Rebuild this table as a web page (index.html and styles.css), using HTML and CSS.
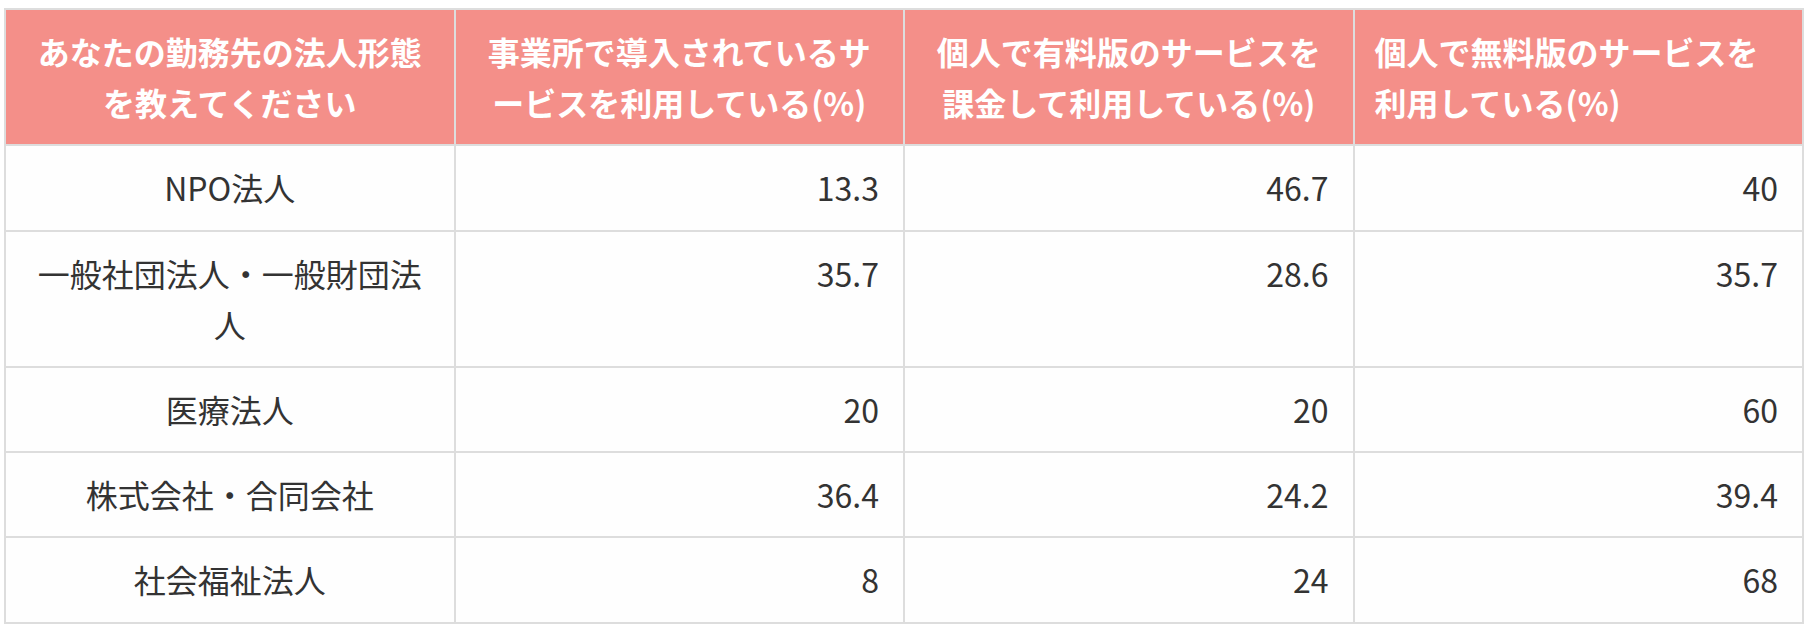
FILE: index.html
```html
<!DOCTYPE html>
<html lang="ja">
<head>
<meta charset="utf-8">
<title>法人形態別 サービス利用状況</title>
<link rel="stylesheet" href="styles.css">
</head>
<body>
<div class="wrap">
<table class="data">
  <thead>
    <tr>
      <th class="c">あなたの勤務先の法人形態を教えてください</th>
      <th class="c">事業所で導入されているサービスを利用している(%)</th>
      <th class="c">個人で有料版のサービスを課金して利用している(%)</th>
      <th class="l">個人で無料版のサービスを利用している(%)</th>
    </tr>
  </thead>
  <tbody>
    <tr><td class="name">NPO法人</td><td class="num">13.3</td><td class="num">46.7</td><td class="num">40</td></tr>
    <tr><td class="name">一般社団法人・一般財団法人</td><td class="num">35.7</td><td class="num">28.6</td><td class="num">35.7</td></tr>
    <tr><td class="name">医療法人</td><td class="num">20</td><td class="num">20</td><td class="num">60</td></tr>
    <tr><td class="name">株式会社・合同会社</td><td class="num">36.4</td><td class="num">24.2</td><td class="num">39.4</td></tr>
    <tr><td class="name">社会福祉法人</td><td class="num">8</td><td class="num">24</td><td class="num">68</td></tr>
  </tbody>
</table>
</div>
</body>
</html>
```

FILE: styles.css
```css
html, body {
  margin: 0;
  padding: 0;
  background: #ffffff;
}
.wrap {
  padding: 8px 0 0 4px;
}
.data {
  width: 1800px;
  table-layout: fixed;
  border-collapse: separate;
  border-spacing: 0;
  border-top: 2px solid #dddddd;
  border-left: 2px solid #dddddd;
  font-family: "Noto Sans CJK JP", "Noto Sans", sans-serif;
  font-size: 32px;
  line-height: 1.6;
  color: #333333;
}
.data th,
.data td {
  border-right: 2px solid #dddddd;
  border-bottom: 2px solid #dddddd;
  padding: 16px 24px;
  vertical-align: top;
}
.data th {
  background: #f48f89;
  color: #ffffff;
  font-weight: 700;
  padding: 16px 20px;
}
.data th.c { text-align: center; }
.data th.l { text-align: left; }
.data td { background: #fefefe; font-weight: 400; }
.data td.name { text-align: center; }
.data td.num { text-align: right; }
```
